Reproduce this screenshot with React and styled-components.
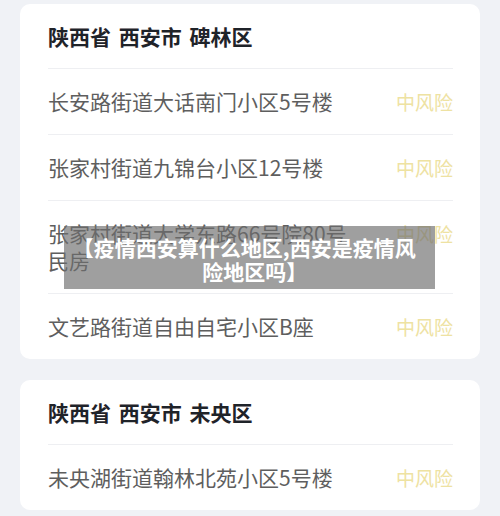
import styled, { createGlobalStyle } from 'styled-components';

const GlobalStyle = createGlobalStyle`
    html, body {
        margin: 0;
        padding: 0;
        background: #f0f2f6;
    }
    body {
        font-family: "Noto Sans CJK SC", "Noto Sans", sans-serif;
    }
`;

const areas = [
    {
        title: '陕西省 西安市 碑林区',
        places: [
            '长安路街道大话南门小区5号楼',
            '张家村街道九锦台小区12号楼',
            '张家村街道大学东路66号院80号民房',
            '文艺路街道自由自宅小区B座',
        ],
    },
    {
        title: '陕西省 西安市 未央区',
        places: ['未央湖街道翰林北苑小区5号楼'],
    },
];

const App = () => {
    return (
        <>
            <GlobalStyle />
            <Styled.Page>
                {areas.map(area => (
                    <Styled.Card key={area.title}>
                        <Styled.Title>{area.title}</Styled.Title>
                        {area.places.map(place => (
                            <Styled.Row key={place}>
                                <Styled.Place>{place}</Styled.Place>
                                <Styled.Risk>中风险</Styled.Risk>
                            </Styled.Row>
                        ))}
                    </Styled.Card>
                ))}
                <Styled.Caption>【疫情西安算什么地区,西安是疫情风险地区吗】</Styled.Caption>
            </Styled.Page>
        </>
    );
};
export default App;

const Page = styled.div`
    position: relative;
    width: 500px;
    height: 516px;
    box-sizing: border-box;
    padding: 4px 20px 0;
    display: flex;
    flex-direction: column;
    gap: 21px;
    overflow: hidden;
`;

const Card = styled.div`
    background: #fff;
    border-radius: 10px;
    padding: 0 27px 0 28px;
`;

const Title = styled.div`
    height: 64px;
    display: flex;
    align-items: center;
    font-size: 21px;
    font-weight: 700;
    word-spacing: 3px;
    color: #1f2329;
    white-space: pre;
`;

const Row = styled.div`
    display: flex;
    align-items: flex-start;
    justify-content: space-between;
    gap: 40px;
    padding: 19px 0;
    border-top: 1px solid #eeeff2;
`;

const Place = styled.div`
    flex: 1;
    font-size: 21px;
    line-height: 27px;
    color: #5e5e5e;
`;

const Risk = styled.div`
    flex: none;
    font-size: 19px;
    line-height: 27px;
    color: #eee2a2;
`;

const Caption = styled.div`
    position: absolute;
    left: 64px;
    top: 226px;
    width: 371px;
    height: 63px;
    box-sizing: border-box;
    padding: 9px 15px 0;
    background: rgba(110, 110, 110, 0.66);
    color: #fff;
    font-size: 21px;
    font-weight: 700;
    line-height: 24px;
    text-align: center;
    font-feature-settings: "halt";
`;

const Styled = {
    Page,
    Card,
    Title,
    Row,
    Place,
    Risk,
    Caption,
};
